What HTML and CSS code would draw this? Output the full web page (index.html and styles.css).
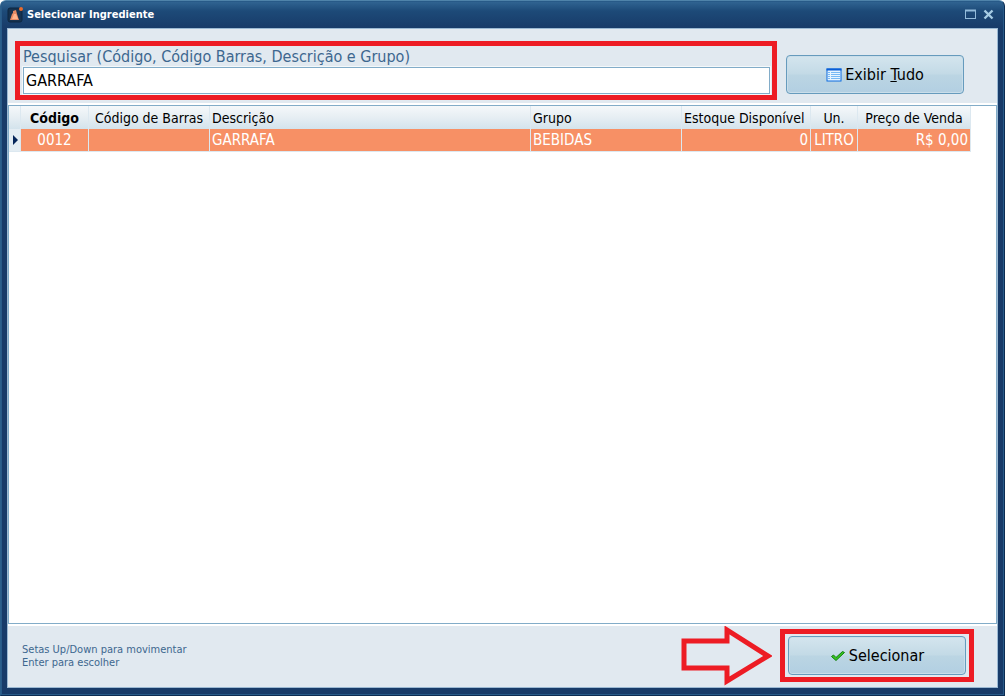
FILE: index.html
```html
<!DOCTYPE html>
<html lang="pt-BR">
<head>
<meta charset="utf-8">
<title>Selecionar Ingrediente</title>
<link rel="stylesheet" href="styles.css">
</head>
<body>
<div class="window">
  <header class="titlebar">
    <svg class="app-icon" width="17" height="17" viewBox="0 0 17 17" aria-hidden="true">
      <rect x="1" y="2" width="14" height="14" rx="2" fill="#16324f" stroke="#0c2743"/>
      <path d="M3 14L5 8L6 7L6 5L9 4L10 8L12 14Z" fill="#e58a64"/>
      <path d="M5 13L7 8H9L11 13Z" fill="#ffb48c"/>
      <circle cx="14" cy="3" r="2" fill="#e96b2c"/>
    </svg>
    <h1 class="title">Selecionar Ingrediente</h1>
    <button class="window-button" type="button" aria-label="Maximizar">
      <svg width="13" height="11" viewBox="0 0 13 11"><rect x="1.5" y="1.5" width="10" height="8" fill="none" stroke="#93bbda"/><path d="M1 1.500H12" stroke="#93bbda" stroke-width="2"/></svg>
    </button>
    <button class="window-button" type="button" aria-label="Fechar">
      <svg width="13" height="11" viewBox="0 0 13 11"><path d="M2.500 1.500L10.500 9.500M10.500 1.500L2.500 9.500" stroke="#a6cce4" stroke-width="2.400"/></svg>
    </button>
  </header>
  <main class="content">
    <form class="search-bar">
      <div class="search-box">
        <label class="search-label" for="search">Pesquisar (Código, Código Barras, Descrição e Grupo)</label>
        <input class="search-input" id="search" type="text" value="GARRAFA">
      </div>
      <button class="action-button" type="button">
        <svg width="16" height="16" viewBox="0 0 16 16" aria-hidden="true">
          <rect x="1" y="2" width="14" height="12" fill="#e8f5ff" stroke="#0a6be0"/>
          <path d="M0.500 2.500H15.500" stroke="#0a5ed7" stroke-width="2"/>
          <path d="M2 5.500H4M2 7.500H4M2 9.500H4M2 11.500H4M5 5.500H14M5 7.500H14M5 9.500H14M5 11.500H14" stroke="#77b9f5"/>
        </svg>
        <span>Exibir <u>T</u>udo</span>
      </button>
    </form>
    <div class="grid">
      <table class="products">
        <colgroup>
          <col class="col-marker"><col class="col-code"><col class="col-barcode"><col class="col-description"><col class="col-group"><col class="col-stock"><col class="col-unit"><col class="col-price">
        </colgroup>
        <thead>
          <tr><th></th><th class="center sorted">Código</th><th class="center">Código de Barras</th><th>Descrição</th><th>Grupo</th><th>Estoque Disponível</th><th class="center">Un.</th><th class="center">Preço de Venda</th></tr>
        </thead>
        <tbody>
          <tr>
            <td class="marker"><svg width="6" height="10" viewBox="0 0 6 10" aria-hidden="true"><path d="M1 0L6 5L1 10Z" fill="#06265a"/></svg></td>
            <td class="center">0012</td><td></td><td>GARRAFA</td><td>BEBIDAS</td><td class="right">0</td><td class="center">LITRO</td><td class="right">R$ 0,00</td>
          </tr>
        </tbody>
      </table>
    </div>
    <footer class="footer">
      <p class="hint">Setas Up/Down para movimentar<br>Enter para escolher</p>
      <svg class="arrow" width="92" height="60" viewBox="0 0 92 60" aria-hidden="true"><path d="M4 15H47V4L88 30L47 55V42H4Z" fill="none" stroke="#ed1c24" stroke-width="5"/></svg>
      <div class="highlight">
        <button class="action-button" type="button">
          <svg width="16" height="16" viewBox="0 0 16 16" aria-hidden="true"><path d="M1.500 8.500L3.500 7L6 9.500L12.500 3.500L14.500 4.500L6 12.500Z" fill="#35c51d" stroke="#137d10"/></svg>
          <span>Selecionar</span>
        </button>
      </div>
    </footer>
  </main>
</div>
</body>
</html>
```
FILE: styles.css
```css
* {
  box-sizing: border-box;
}

body {
  margin: 0;
  background: #fff;
  font-family: "DejaVu Sans Condensed", "DejaVu Sans", sans-serif;
  font-stretch: condensed;
  font-size: 16px;
  color: #000;
}

button,
input {
  font: inherit;
  color: inherit;
}

.window {
  display: flex;
  flex-direction: column;
  height: 100vh;
  padding: 0 6px 7px;
  border: 1px solid #4f83aa;
  border-color: #4f83aa #0c2c53 #0c2c53 #2c5f8b;
  border-radius: 6px 6px 0 0;
  background: linear-gradient(#326694, #1d4a78 10px, #183b69 27px);
  box-shadow: inset 0 0 0 1px #285a88;
}

.titlebar {
  display: flex;
  align-items: center;
  gap: 3px;
  height: 27px;
  flex: none;
  padding: 0 2px 1px 0;
}

.title {
  flex: 1;
  margin: 0;
  font-size: 11px;
  font-weight: bold;
  color: #fff;
}

.window-button {
  display: flex;
  padding: 1px;
  border: 0;
  background: none;
}

.content {
  display: flex;
  flex: 1;
  flex-direction: column;
  min-height: 0;
  border: 1px solid #9bb9d3;
  background: #e1e9f0;
}

.search-bar {
  display: flex;
  align-items: flex-end;
  gap: 9px;
  padding: 12px 33px 3px 7px;
  border-bottom: 2px solid #fff;
}

.search-bar .action-button {
  margin-bottom: 6px;
}

.search-box {
  display: flex;
  flex: 1;
  flex-direction: column;
  padding: 0 2px 1px 3px;
  border: 5px solid #ed1c24;
}

.search-label {
  line-height: 21px;
  color: #3d678f;
}

.search-input {
  width: 100%;
  height: 27px;
  padding: 0 2px;
  border: 1px solid #82acc8;
  outline: 1px solid #f4f8fa;
  background: #fff;
}

.action-button {
  display: flex;
  align-items: center;
  justify-content: center;
  gap: 3px;
  width: 178px;
  height: 39px;
  padding: 0;
  border: 1px solid #669bbd;
  border-radius: 4px;
  background: linear-gradient(#d4e5ee, #c3dae6 48%, #bbd5e3 52%, #b2cfe2);
  box-shadow: inset 0 0 0 1px #cadeea;
}

.grid {
  flex: 1;
  min-height: 0;
  overflow: auto;
  border: 1px solid #82acc8;
  background: #fff;
}

.products {
  width: 962px;
  table-layout: fixed;
  border-collapse: separate;
  border-spacing: 0;
}

.col-marker { width: 12px; }
.col-code { width: 68px; }
.col-barcode { width: 121px; }
.col-description { width: 321px; }
.col-group { width: 151px; }
.col-stock { width: 129px; }
.col-unit { width: 47px; }
.col-price { width: 113px; }

.products th,
.products td {
  height: 23px;
  padding: 0 2px;
  border-right: 1px solid #dce8f0;
  font-weight: normal;
  text-align: left;
  white-space: nowrap;
}

.products th {
  background: linear-gradient(#f5f8fa, #e6eef3 50%, #d3e3ec);
  font-size: 14px;
}

.products td {
  border-bottom: 1px solid #dce8f0;
  background: #f79065;
  font-size: 15px;
  color: #fff;
}

.products .sorted {
  font-weight: bold;
}

.products .center {
  padding: 0;
  text-align: center;
}

.products .right {
  text-align: right;
}

.products .marker {
  padding: 0 3px;
  background: #e4edf3;
  line-height: 0;
}

.footer {
  display: flex;
  align-items: center;
  height: 63px;
  padding: 0 23px 2px 14px;
  border-top: 2px solid #fff;
}

.hint {
  flex: 1;
  margin: 0;
  font-size: 11px;
  line-height: 13px;
  color: #3d678f;
}

.arrow {
  margin-right: 8px;
}

.highlight {
  padding: 2px 3px;
  border: 5px solid #ed1c24;
}
```
